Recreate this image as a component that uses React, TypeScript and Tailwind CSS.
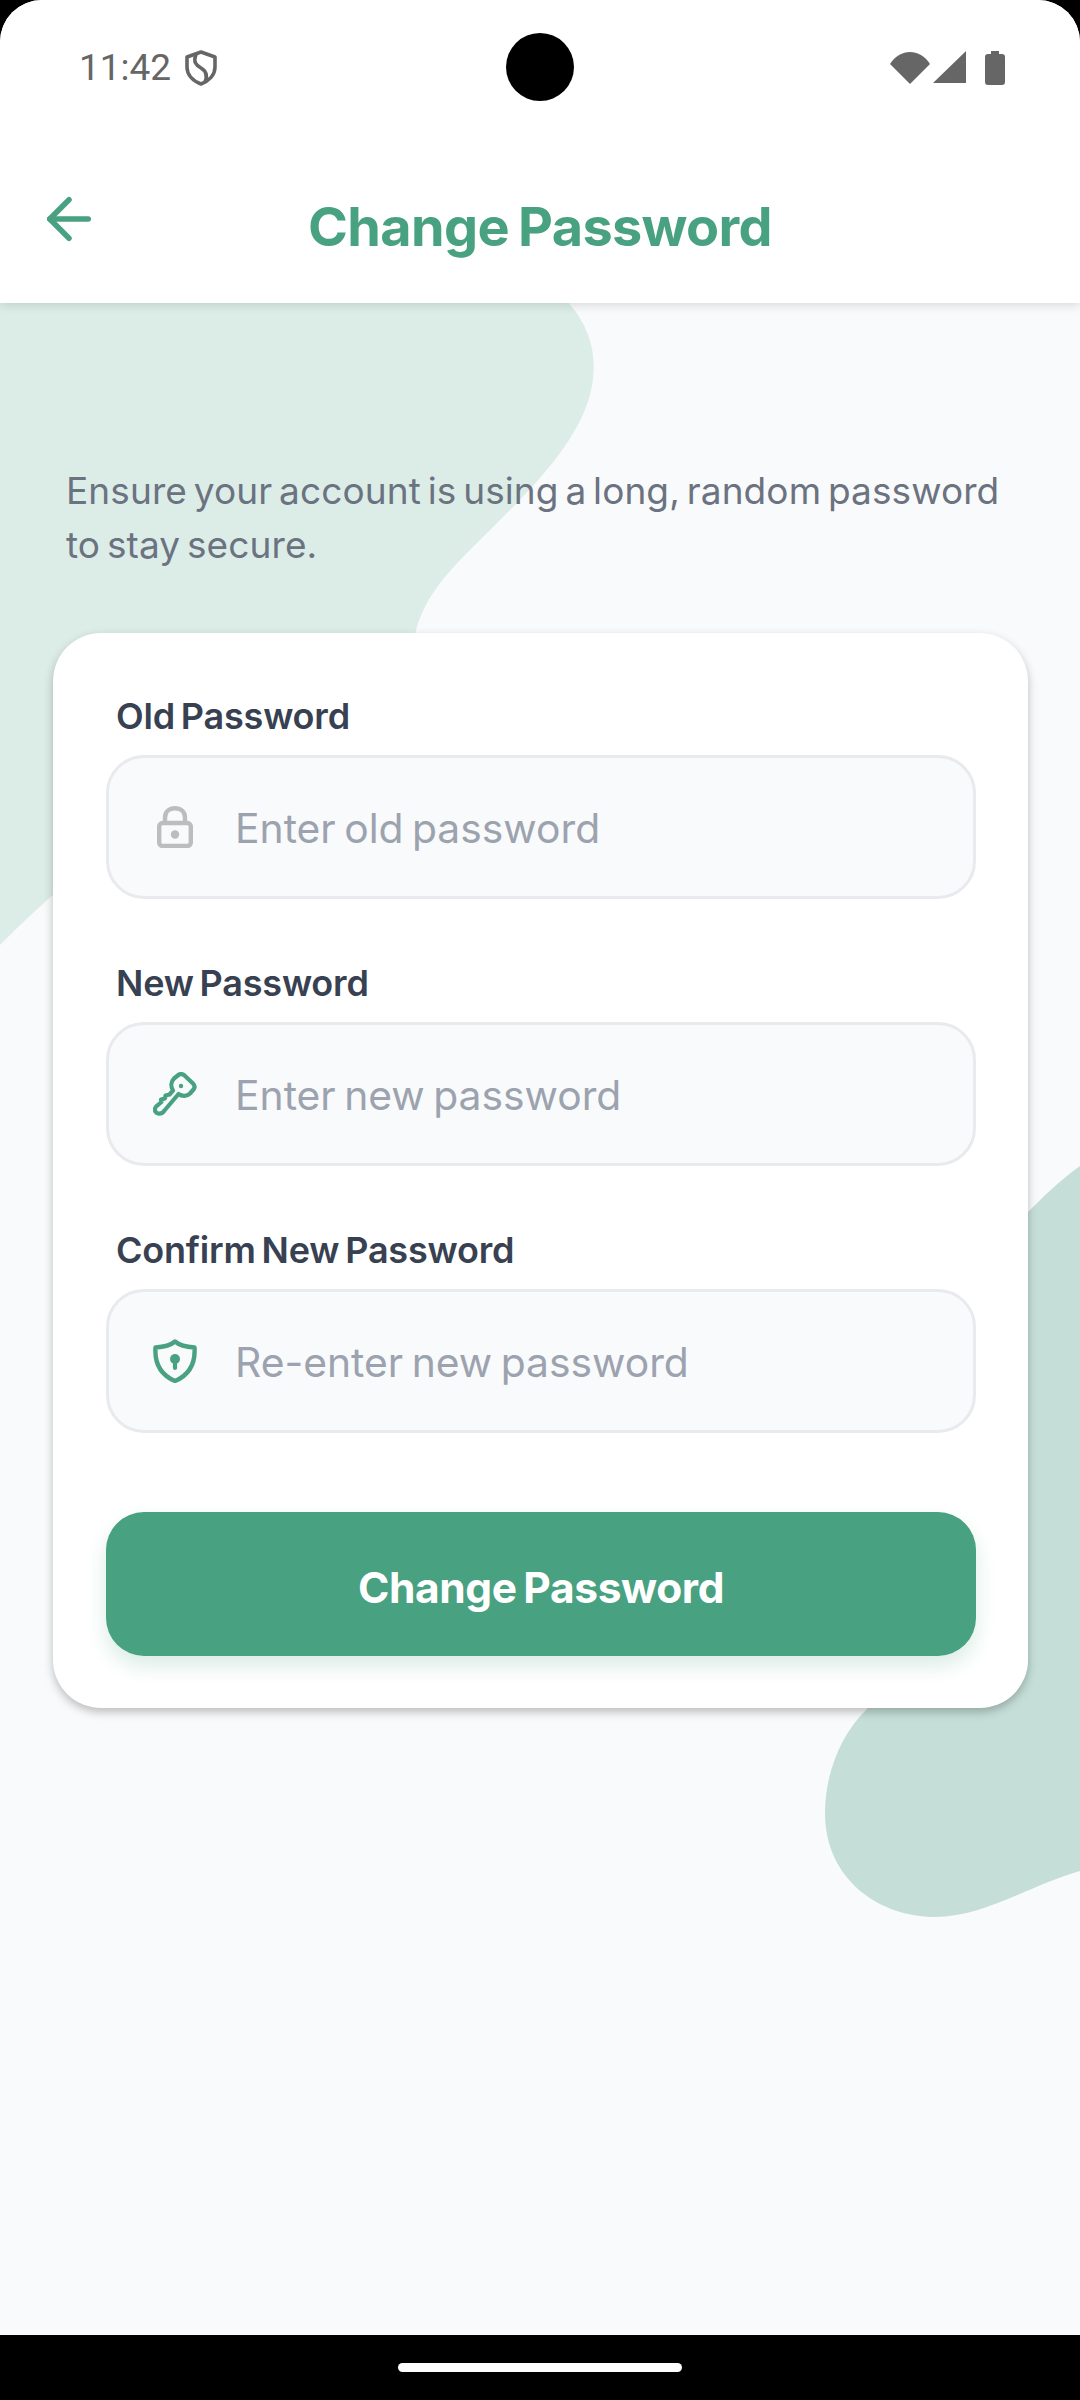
import { ArrowLeft } from "lucide-react";

const sans = "font-['Inter','Noto_Sans',sans-serif]";

function ShieldStatus() {
  return (
    <svg width="32" height="36" viewBox="0 0 32 36" fill="none" stroke="#666" strokeWidth="3.6" className="ml-[14px]">
      <path d="M16 2 L30 7 V17 C30 25 24 31 16 34 C8 31 2 25 2 17 V7 Z" strokeLinejoin="round" />
      <path d="M11 4.5 C8 12 11 15 16 18 C21 21 23 25 20 32" />
    </svg>
  );
}

function LockIcon() {
  return (
    <svg width="36" height="42" viewBox="0 0 36 42" fill="none">
      <rect x="2.2" y="17" width="31.6" height="23" rx="3.5" stroke="#bdbdbd" strokeWidth="4.4" />
      <path d="M8 17 V11.5 C8 5.5 12.5 2.2 18 2.2 C23.5 2.2 28 5.5 28 11.5 V17" stroke="#bdbdbd" strokeWidth="4.4" />
      <circle cx="18" cy="28.5" r="4.2" fill="#bdbdbd" />
    </svg>
  );
}

function KeyIcon() {
  return (
    <svg width="44" height="44" viewBox="0 0 44 44" fill="none" stroke="#48a180" strokeWidth="4.2" strokeLinejoin="round">
      <path d="M26 2.5 C28 1.6 29.5 2 31 3 L40 11.5 C42 13.5 42 15.5 40.5 17.5 L37 21.5 C34 24.5 29 24.5 25.5 22 L11.5 38.5 C10 40.8 7.5 42 5 41.5 C2.5 41 1.5 38.5 2 36.5 C2.3 34.8 4 33.5 5.5 32.5 L8.5 30 L8 27.5 L12 26.5 L12.5 23.5 L16.5 22.5 L20 18.5 C17.5 14.5 18 9.5 21 6.5 Z" />
      <circle cx="28" cy="14" r="2.2" fill="#48a180" stroke="none" />
    </svg>
  );
}

function ShieldIcon() {
  return (
    <svg width="44" height="44" viewBox="0 0 44 44" fill="none">
      <path d="M22 2.5 C26 6 32 8 41.5 8.5 C42.5 24 36 36 22 42 C8 36 1.5 24 2.5 8.5 C12 8 18 6 22 2.5 Z" stroke="#48a180" strokeWidth="4.4" strokeLinejoin="round" />
      <circle cx="22" cy="20" r="5" fill="#48a180" />
      <path d="M22 22 V29" stroke="#48a180" strokeWidth="4.2" strokeLinecap="round" />
    </svg>
  );
}

function Field({ label, placeholder, icon }: { label: string; placeholder: string; icon: React.ReactNode }) {
  return (
    <div className="flex flex-col">
      <label className="ml-[10px] h-[46px] text-[36px] leading-[46px] font-semibold tracking-[-0.2px] [word-spacing:-3px] text-[#374151]">{label}</label>
      <div className="mt-[16px] flex h-[144px] items-center rounded-[38px] border-[3px] border-[#e8eaee] bg-[#f9fafb]">
        <div className="ml-[44px] flex w-[44px] justify-center">{icon}</div>
        <span className="mt-[2px] ml-[38px] text-[40.8px] leading-[54px] font-normal [word-spacing:-3px] text-[#9ca3af]">{placeholder}</span>
      </div>
    </div>
  );
}

export default function App() {
  return (
    <div className={`flex h-[2400px] w-[1080px] flex-col overflow-hidden bg-black ${sans}`}>
      <div className="relative flex h-[2335px] flex-col overflow-hidden rounded-t-[42px] bg-[#f9fafb]">
        <svg className="absolute top-0 left-0" width="1080" height="2335" viewBox="0 0 1080 2335">
          <path d="M0 300 L566 300 C589 325 600 355 590 395 C575 450 520 500 470 550 C440 580 420 605 414 640 L200 800 C140 830 90 860 53 895 C30 915 15 930 0 945 Z" fill="#dcede8" />
          <path d="M1080 1166 C1060 1180 1040 1200 1028 1212 L900 1430 L867 1709 C840 1735 825 1775 825 1813 C825 1880 880 1917 935 1917 C985 1917 1030 1885 1080 1871 Z" fill="#c5dfd8" />
        </svg>

        <header className="relative z-10 h-[303px] bg-white shadow-[0_2px_10px_rgba(0,0,0,0.14)]">
          <div className="flex h-[134px] items-start justify-between pt-[46px] pr-[75px] pl-[79px]">
            <div className="flex items-center">
              <span className="font-['Roboto',sans-serif] text-[37px] leading-[44px] text-[#666666]">11:42</span>
              <ShieldStatus />
            </div>
            <div className="mt-[5px] flex items-start gap-[3px]">
              <svg width="40" height="33" viewBox="0 0 40 33"><path d="M0 13 C10 -3 30 -3 40 13 L20 33 Z" fill="#666" /></svg>
              <svg width="33" height="33" viewBox="0 0 33 33"><path d="M33 0 V32 H0 Z" fill="#666" /></svg>
              <svg className="ml-[16px]" width="20" height="34" viewBox="0 0 20 34"><path d="M6 0 H14 V3 H17 Q20 3 20 6 V31 Q20 34 17 34 H3 Q0 34 0 31 V6 Q0 3 3 3 H6 Z" fill="#666" /></svg>
            </div>
          </div>
          <div className="absolute top-[33px] left-[506px] h-[68px] w-[68px] rounded-full bg-black" />
          <div className="relative flex h-[169px] items-start justify-center pt-[59px]">
            <ArrowLeft className="absolute top-[52px] left-[36px]" size={66} color="#48a180" strokeWidth={2} />
            <h1 className="text-[54px] leading-[68px] font-bold tracking-[-0.65px] [word-spacing:-3px] text-[#48a180]">Change Password</h1>
          </div>
        </header>

        <main className="relative z-10 flex flex-col pr-[52px] pl-[53px]">
          <p className="mt-[161px] ml-[13px] w-[960px] text-[37px] leading-[54px] font-normal tracking-[0.1px] [word-spacing:-3.7px] text-[#6b7280]">
            Ensure your account is using a long, random password to stay secure.
          </p>
          <section className="mt-[61px] flex flex-col rounded-[48px] bg-white pt-[60px] pr-[52px] pb-[52px] pl-[53px] shadow-[0_4px_10px_rgba(0,0,0,0.25)]">
            <div className="flex flex-col gap-[61px]">
              <Field label="Old Password" placeholder="Enter old password" icon={<LockIcon />} />
              <Field label="New Password" placeholder="Enter new password" icon={<KeyIcon />} />
              <Field label="Confirm New Password" placeholder="Re-enter new password" icon={<ShieldIcon />} />
            </div>
            <button className="mt-[79px] flex h-[144px] items-center justify-center rounded-[38px] bg-[#48a180] pt-[8px] text-[42.5px] font-bold tracking-[-0.4px] [word-spacing:-3px] text-white shadow-[0_10px_20px_rgba(72,161,128,0.2)]">
              Change Password
            </button>
          </section>
        </main>
      </div>
      <div className="flex flex-1 items-center justify-center">
        <div className="h-[9px] w-[284px] rounded-full bg-white" />
      </div>
    </div>
  );
}
